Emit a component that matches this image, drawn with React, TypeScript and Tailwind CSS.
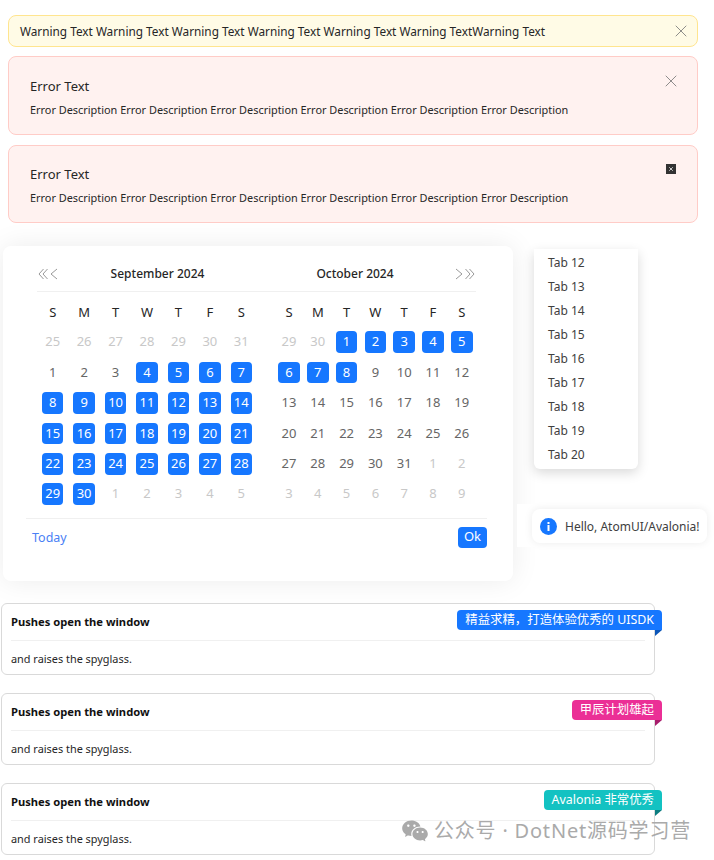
import { X } from 'lucide-react';
import { RiWechatFill } from 'react-icons/ri';

const weekdays = ['S', 'M', 'T', 'W', 'T', 'F', 'S'];

type Day = { label: number; kind: 'out' | 'in' | 'sel' };

function range(from: number, to: number, kind: Day['kind']): Day[] {
  const days: Day[] = [];
  for (let i = from; i <= to; i++) days.push({ label: i, kind });
  return days;
}

const september: Day[] = [
  ...range(25, 31, 'out'),
  ...range(1, 3, 'in'),
  ...range(4, 30, 'sel'),
  ...range(1, 5, 'out'),
];

const october: Day[] = [
  ...range(29, 30, 'out'),
  ...range(1, 8, 'sel'),
  ...range(9, 31, 'in'),
  ...range(1, 9, 'out'),
];

const tabs = [12, 13, 14, 15, 16, 17, 18, 19, 20];

function DoubleLeft() {
  return (
    <svg width="20" height="12" viewBox="0 0 20 12" fill="none" stroke="#999" strokeWidth="1">
      <path d="M5.5 1L1 6l4.5 5M9.5 1L5 6l4.5 5M19 1l-6 5 6 5" />
    </svg>
  );
}

function DoubleRight() {
  return (
    <svg width="20" height="12" viewBox="0 0 20 12" fill="none" stroke="#999" strokeWidth="1">
      <path d="M1 1l6 5-6 5M10.5 1l4.5 5-4.5 5M14.5 1l4.5 5-4.5 5" />
    </svg>
  );
}

function InfoIcon() {
  return (
    <svg width="17" height="17" viewBox="0 0 17 17">
      <circle cx="8.5" cy="8.5" r="8.5" fill="#1677ff" />
      <rect x="7.5" y="7" width="2" height="6" fill="#fff" />
      <rect x="7.5" y="4" width="2" height="2" fill="#fff" />
    </svg>
  );
}

function Month({ days, className }: { days: Day[]; className: string }) {
  return (
    <div className={className}>
      {weekdays.map((d, i) => (
        <div key={i} className="h-6 flex items-center justify-center text-[13px] text-[#262626]">
          {d}
        </div>
      ))}
      <div className="col-span-7 h-[2px]" />
      {days.map((d, i) => (
        <div key={i} className="h-[30.4px] flex items-center justify-center text-[13px]">
          {d.kind === 'sel' ? (
            <span className="w-[21.5px] h-[21.5px] rounded-[4px] bg-[#1677ff] text-white flex items-center justify-center">
              {d.label}
            </span>
          ) : (
            <span className={d.kind === 'out' ? 'text-[#c8c8c8]' : 'text-[#666666]'}>{d.label}</span>
          )}
        </div>
      ))}
    </div>
  );
}

function Calendar() {
  return (
    <div className="w-[510px] h-[335px] shrink-0 bg-white rounded-lg shadow-[0_0_28px_rgba(0,0,0,0.08)]">
      <div className="ml-[34px] w-[439px] h-[46px] pt-[10px] border-b border-[#f0f0f0] flex items-center text-[12px] font-medium text-[#262626]">
        <span className="ml-px flex">
          <DoubleLeft />
        </span>
        <span className="ml-[45.5px] w-[108px] text-center">September 2024</span>
        <span className="ml-[93.5px] w-[100px] text-center">October 2024</span>
        <span className="ml-auto flex mr-[1px]">
          <DoubleRight />
        </span>
      </div>
      <div className="ml-[34px] mt-[9px] flex gap-[17.6px]">
        <Month days={september} className="w-[220px] grid grid-cols-7" />
        <Month days={october} className="w-[201.6px] grid grid-cols-7" />
      </div>
      <div className="ml-[23px] mr-[26px] mt-[9px] border-t border-[#f0f0f0] pt-[7px] flex items-center justify-between">
        <span className="ml-[6px] pt-[3px] text-[12.5px] text-[#4a80f5]">Today</span>
        <span className="w-[29px] h-[21px] rounded-[4px] bg-[#1677ff] text-white text-[13px] flex items-center justify-center">
          Ok
        </span>
      </div>
    </div>
  );
}

function ErrorAlert({ dark }: { dark?: boolean }) {
  return (
    <div
      className={`relative rounded-lg border border-[#ffccc7] bg-[#fff2f0] pl-[21px] ${
        dark ? 'h-[78px] pt-[18px]' : 'h-[79px] pt-[19px]'
      }`}
    >
      <div className="text-[13px] leading-[20px] text-[#262626]">Error Text</div>
      <div className="mt-[5px] text-[10.9px] leading-[18px] text-[#262626]">
        Error Description Error Description Error Description Error Description Error Description Error Description
      </div>
      {dark ? (
        <span className="absolute left-[657px] top-[18px] w-[10px] h-[10px] bg-[#333] flex items-center justify-center">
          <X size={6} color="#fff" strokeWidth={3} />
        </span>
      ) : (
        <X className="absolute left-[652px] top-[14px]" size={20} color="#777" strokeWidth={1} />
      )}
    </div>
  );
}

function Card({ ribbon, color, fold }: { ribbon: string; color: string; fold: string }) {
  return (
    <div className="relative h-[72px] w-[654px] ml-px rounded-md border border-[#d9d9d9] bg-white px-[9px]">
      <div className="h-[37px] border-b border-[#f0f0f0] flex items-center text-[11.2px] font-bold text-[#111]">
        Pushes open the window
      </div>
      <div className="h-[33px] pt-[3px] flex items-center text-[10.9px] text-[#262626]">and raises the spyglass.</div>
      <span
        className={`absolute right-[-8px] top-[6px] h-5 pt-px rounded-l-[4px] rounded-tr-[4px] px-2 flex items-center text-[12.4px] text-white ${color}`}
      >
        {ribbon}
      </span>
      <span className={`absolute right-[-8px] top-[26px] w-0 h-0 border-t-[6px] border-r-[7px] border-r-transparent ${fold}`} />
    </div>
  );
}

export default function App() {
  return (
    <div className="relative h-[860px] overflow-hidden bg-white font-['Noto_Sans','Noto_Sans_CJK_SC',sans-serif]">
      <div className="pl-2 pr-4 pt-[15px]">
        <div className="relative h-8 rounded-lg border border-[#ffe58f] bg-[#fffbe6] pl-[11px] pt-px flex items-center text-[11.8px] text-[#262626]">
          Warning Text Warning Text Warning Text Warning Text Warning Text Warning TextWarning Text
          <X className="absolute right-[6px] top-[5px]" size={20} color="#777" strokeWidth={1} />
        </div>
        <div className="mt-[9px]">
          <ErrorAlert />
        </div>
        <div className="mt-[10px]">
          <ErrorAlert dark />
        </div>
      </div>

      <div className="mt-[23px] ml-[3px] flex">
        <Calendar />
        <div className="ml-1 flex-1 relative">
          <div className="ml-[17px] mt-[3px] w-[104px] h-[220px] bg-white rounded-b-md shadow-[0_4px_12px_rgba(0,0,0,0.15)] flex flex-col pt-[2px]">
            {tabs.map((t) => (
              <div key={t} className="h-6 pl-[14px] flex items-center text-[12px] text-[#404040]">
                Tab {t}
              </div>
            ))}
          </div>
          <div className="mt-[35px] h-[43px] bg-white pl-[15px] pt-[5px]">
            <div className="w-[175px] h-[34px] pt-px rounded-lg bg-white shadow-[0_0_8px_rgba(0,0,0,0.08)] pl-2 flex items-center gap-2 text-[12px] text-[#404040]">
              <InfoIcon />
              Hello, AtomUI/Avalonia!
            </div>
          </div>
        </div>
      </div>

      <div className="mt-[22px] flex flex-col gap-[18px]">
        <Card ribbon="精益求精，打造体验优秀的 UISDK" color="bg-[#1677ff]" fold="border-t-[#0b56b8]" />
        <Card ribbon="甲辰计划雄起" color="bg-[#eb2f96]" fold="border-t-[#a81c6c]" />
        <Card ribbon="Avalonia 非常优秀" color="bg-[#13c2c2]" fold="border-t-[#0b7d80]" />
      </div>

      <div className="absolute left-[401px] top-[816px] flex items-center gap-[5px] text-[20px] tracking-[0.8px] text-[#aaaaaa]">
        <RiWechatFill size={28} color="#aaaaaa" />
        公众号 · DotNet源码学习营
      </div>
    </div>
  );
}
